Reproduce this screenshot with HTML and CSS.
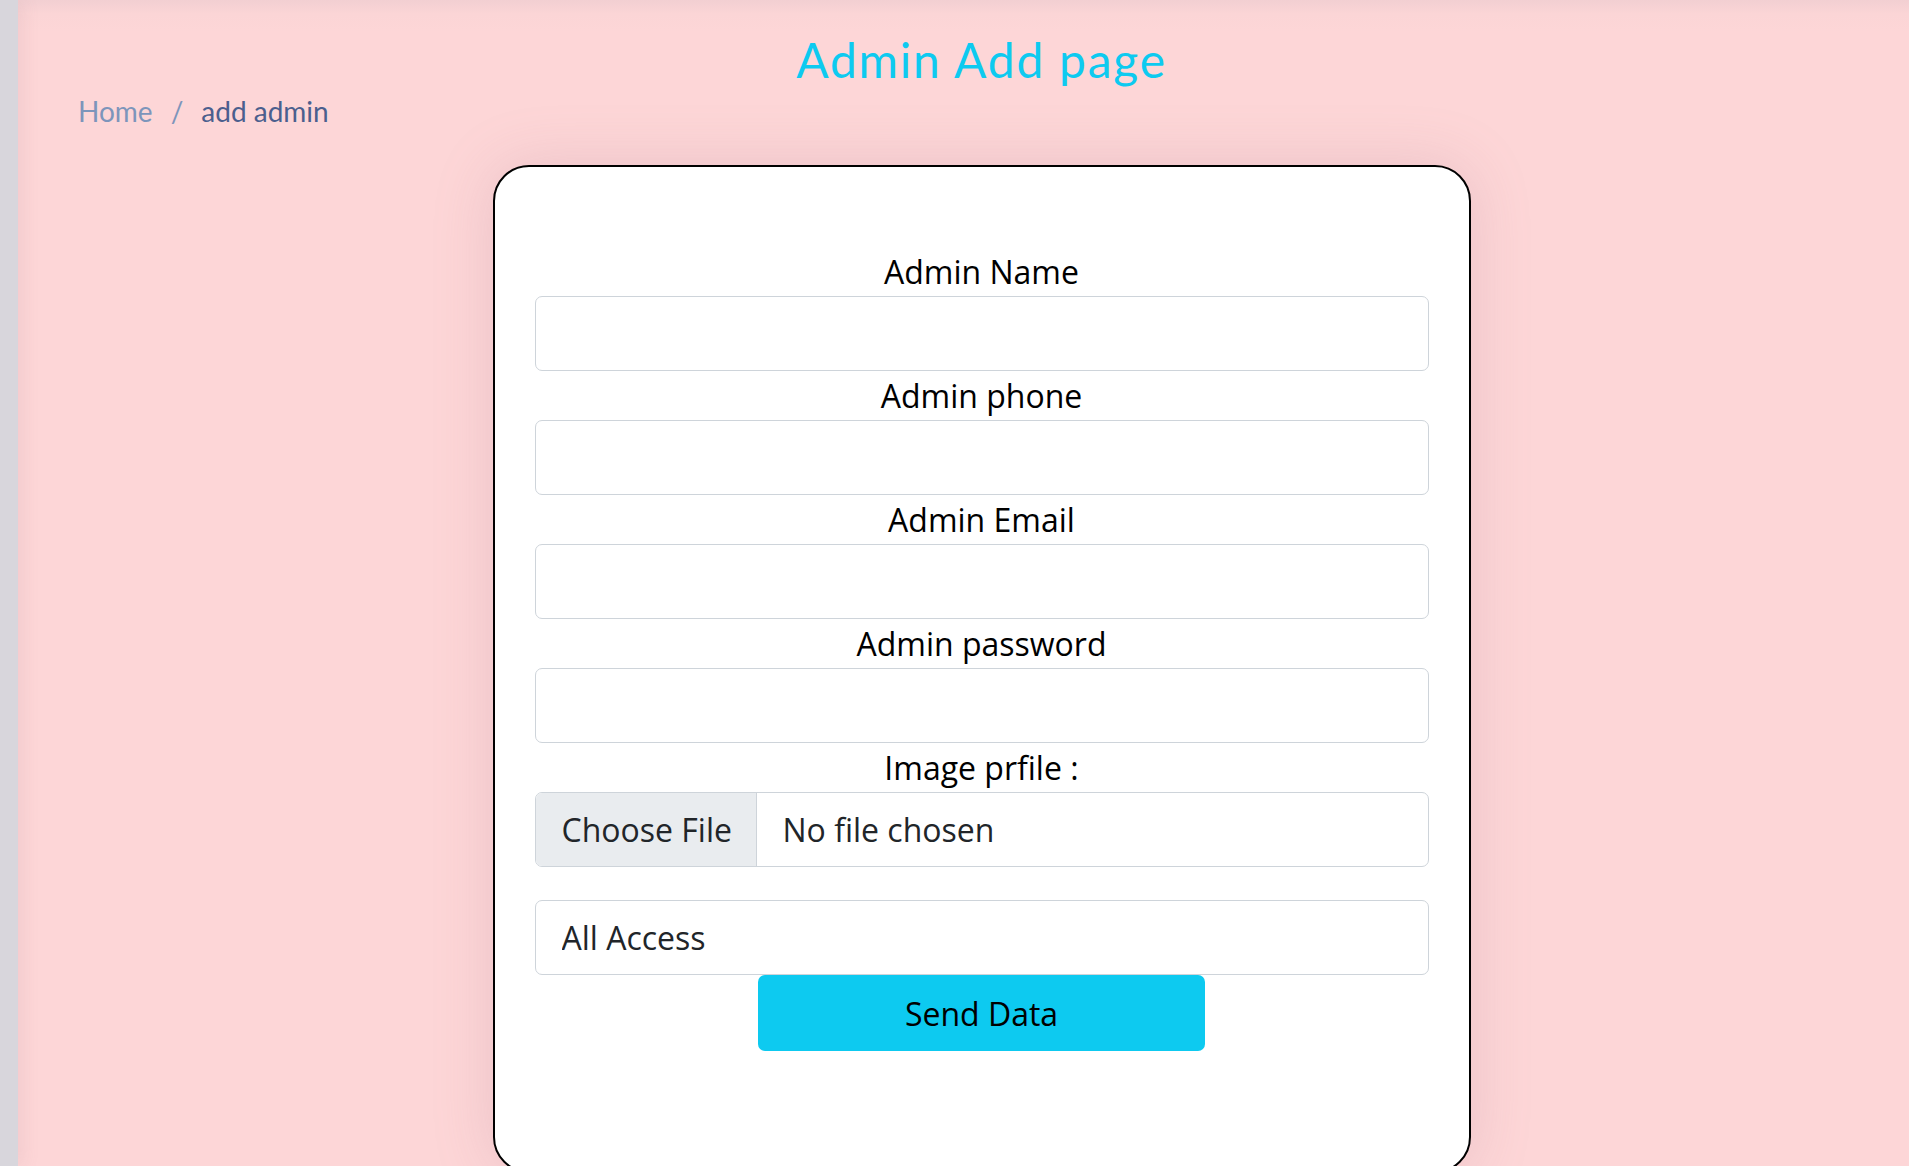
FILE: index.html
```html
<!DOCTYPE html>
<html lang="en">
<head>
<meta charset="utf-8">
<title>Admin Add page</title>
<link rel="stylesheet" href="styles.css">
</head>
<body>
<div class="page">
  <aside class="sidebar"></aside>
  <main class="main">
    <h1 class="title">Admin Add page</h1>
    <nav class="breadcrumb">
      <span class="crumb-link">Home</span>
      <span class="crumb-sep">/</span>
      <span class="crumb-active">add admin</span>
    </nav>
    <div class="card">
      <form class="form">
        <label class="label">Admin Name</label>
        <input class="control" type="text">
        <label class="label">Admin phone</label>
        <input class="control" type="text">
        <label class="label">Admin Email</label>
        <input class="control" type="text">
        <label class="label">Admin password</label>
        <input class="control" type="text">
        <label class="label">Image prfile :</label>
        <div class="file-control">
          <span class="file-btn">Choose File</span>
          <span class="file-name">No file chosen</span>
        </div>
        <select class="control select">
          <option>All Access</option>
        </select>
        <button class="send" type="button">Send Data</button>
      </form>
    </div>
  </main>
</div>
</body>
</html>
```
FILE: styles.css
```css
* { box-sizing: border-box; }

html, body {
  margin: 0;
  padding: 0;
  height: 1166px;
  overflow: hidden;
  background: #fdd6d7;
}

.page {
  display: flex;
  height: 1166px;
}

.sidebar {
  width: 18px;
  flex: 0 0 18px;
  background: #d8d6dc;
  box-shadow: 4px 0 18px rgba(150, 110, 120, 0.12);
  z-index: 1;
}

.main {
  flex: 1;
  padding: 31px 0 0 36px;
  background: linear-gradient(to bottom, #f2cfd2 0, #fbd5d6 14px, #fdd6d7 32px);
  min-width: 0;
}

.title {
  margin: 0;
  text-align: center;
  font-family: "Lato", "Open Sans", sans-serif;
  font-weight: 400;
  font-size: 48px;
  line-height: 58px;
  letter-spacing: 1.75px;
  color: #0dcaf0;
}

.breadcrumb {
  margin: 1px 0 0 24px;
  font-family: "Lato", "Open Sans", sans-serif;
  font-size: 28px;
  line-height: 42px;
  display: flex;
}

.crumb-link { color: #7d95bb; }
.crumb-sep { color: #7d95bb; padding: 0 18px; }
.crumb-active { color: #4b5f8e; }

.card {
  width: 978px;
  margin: 33px auto 0;
  background: #fff;
  border: 2px solid #000;
  border-radius: 36px;
  padding: 80px 40px 120px;
  box-shadow: 0 0 60px rgba(170, 120, 140, 0.22);
}

.form {
  display: flex;
  flex-direction: column;
  font-family: "Open Sans", "Noto Sans", sans-serif;
}

.label {
  display: block;
  text-align: center;
  font-size: 32px;
  line-height: 49px;
  color: #000;
}

.control {
  display: block;
  width: 100%;
  height: 75px;
  border: 1px solid #ced4da;
  border-radius: 7px;
  background: #fff;
  font-family: "Open Sans", sans-serif;
  font-size: 32px;
  color: #212529;
  padding: 0 26px;
  outline: none;
}

.file-control {
  display: flex;
  height: 75px;
  border: 1px solid #ced4da;
  border-radius: 7px;
  overflow: hidden;
  font-size: 32px;
  color: #212529;
  background: #fff;
}

.file-btn {
  display: flex;
  align-items: center;
  width: 221px;
  padding-left: 26px;
  background: #e9ecef;
  border-right: 1px solid #ced4da;
}

.file-name {
  display: flex;
  align-items: center;
  padding-left: 26px;
}

.select {
  margin-top: 33px;
  appearance: none;
  -webkit-appearance: none;
}

.send {
  display: block;
  width: 50%;
  height: 76px;
  margin: 0 auto;
  border: none;
  border-radius: 7px;
  background: #0dcaf0;
  color: #000;
  font-family: "Open Sans", sans-serif;
  font-size: 32px;
}
```
